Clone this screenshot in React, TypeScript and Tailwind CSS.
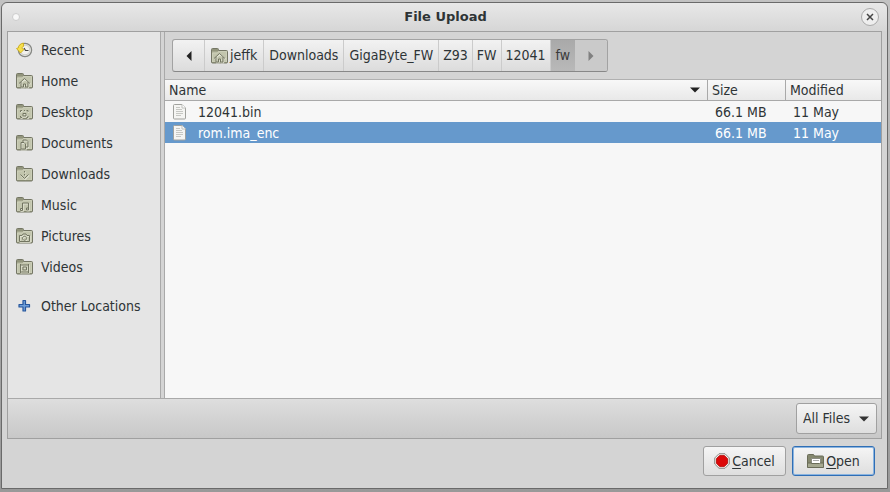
import React, { useState } from 'react';

type Glyph = 'home' | 'desktop' | 'documents' | 'downloads' | 'music' | 'pictures' | 'videos';

const glyphs: Record<Glyph, React.ReactNode> = {
  home: <path d="M3 10.500 8.500 5.500l5.500 5M5 9v5h2.500v-3h2v3H12V9" />,
  desktop: <path d="M4.500 8V6.500H6M10.500 6.500H12V8M4.500 12v1.500H6M12 12v1.500h-1.500M8 6.500h1M7 9.500h3v2.500H7z" />,
  documents: <path d="M5 7.500h3L9.500 9v5H5zM7 7V5h3.500L12 6.500V12H10" />,
  downloads: <path d="M8.500 5v1.500M8.500 8v1.500M4.500 8.500l4 4 4-4" />,
  music: <path d="M6.500 12.500V6h6v6M4.500 11.500h2v2h-2zM10.500 11h2v2h-2z" />,
  pictures: <path d="M3.500 7.500h2.500l1-1.500h3l1 1.500h2.500V13.500h-10zM8.500 8.300a2 2 0 1 0 .01 0" />,
  videos: <path d="M4.500 5v9M12.500 5v9M4.500 6h8M4.500 13h8M7 8h3.500v3H7z" />,
};

function Folder({ glyph }: { glyph: Glyph }) {
  return (
    <svg width="17" height="16" viewBox="0 0 17 16" fill="none" className="shrink-0" aria-hidden="true">
      <path d="M.5 14V1.500q0-1 1-1h5q1 0 1 1v1h8q1 0 1 1V14q0 1-1 1h-14q-1 0-1-1z" fill="#b4b79e" stroke="#747665" />
      <path d="M1 1h6v2.500H1z" fill="#92957c" />
      <path d="M1.500 14V5h5l1-1.500h8V14z" fill="#c2c5ad" stroke="#d6d9c4" strokeWidth=".6" />
      <path d="M1 14.500h15" stroke="#858871" />
      <g stroke="#eef0e2" strokeWidth="1.200" transform="translate(.6 .8)" opacity=".7">
        {glyphs[glyph]}
      </g>
      <g stroke="#727561" strokeWidth="1">
        {glyphs[glyph]}
      </g>
    </svg>
  );
}

function RecentIcon() {
  return (
    <svg width="17" height="16" viewBox="0 0 17 16" fill="none" className="shrink-0" aria-hidden="true">
      <circle cx="9" cy="8" r="6.600" fill="#f1f1ee" stroke="#858783" strokeWidth="1.300" />
      <circle cx="9" cy="8" r="4.900" stroke="#c8c9c4" />
      <path d="M8 6 9.500 8.500h3" stroke="#444" strokeWidth="1.200" />
      <path d="M7.500 1C4.300 1.500 2.500 3.500 2.200 6L.5 6.500 4.500 11 8 7.500 6 6.500C6.200 5 6.500 4.500 7.500 4.500z" fill="#f6df4c" stroke="#c9a80f" strokeWidth=".8" />
    </svg>
  );
}

function PlusIcon() {
  return (
    <svg width="17" height="16" viewBox="0 0 17 16" className="shrink-0" aria-hidden="true">
      <path d="M7 2.500h2.500v4h4V9h-4v4H7V9H3V6.500h4z" fill="#6f9fd8" stroke="#27579d" strokeWidth="1.200" strokeLinejoin="round" />
    </svg>
  );
}

function FileIcon() {
  return (
    <svg width="14" height="16" viewBox="0 0 14 16" fill="none" className="block" aria-hidden="true">
      <path d="M1.500.5H9l3.500 3.500v10q0 1-1 1h-10q-1 0-1-1v-12.500q0-1 1-1z" fill="#f5f5f3" stroke="#a0a19d" />
      <path d="M9 .5V4h3.500" fill="#fff" stroke="#c0c1bd" />
      <path d="M3 3.500h4M3 5.500h6M3 7.500h7M3 9.500h7M3 11.500h5" stroke="#c6c7c3" />
    </svg>
  );
}

function StopIcon() {
  return (
    <svg width="16" height="16" viewBox="0 0 16 16" className="shrink-0" aria-hidden="true">
      <path d="M5 .7h6L15.300 5v6L11 15.300H5L.7 11V5z" fill="#f2efec" stroke="#8c8a87" strokeWidth="1" />
      <path d="M5.700 2.400h4.600l3.300 3.300v4.600l-3.300 3.300H5.700l-3.300-3.300V5.700z" fill="#dc0808" stroke="#b00000" strokeWidth=".8" />
    </svg>
  );
}

function OpenIcon() {
  return (
    <svg width="17" height="16" viewBox="0 0 17 16" fill="none" className="shrink-0" aria-hidden="true">
      <path d="M.5 14V2.500q0-1 1-1h5l1 1.500h8q1 0 1 1V14z" fill="#85886f" stroke="#6a6c58" />
      <path d="M4.500 5.500h9v6h-9z" fill="#fff" stroke="#8b8c83" />
      <path d="M6 7.500h6" stroke="#aaa" />
      <path d="M.5 14.500V10H4l1 .5h7.500l1-.5h3v4.500z" fill="#a5a890" stroke="#6a6c58" />
    </svg>
  );
}

const places: { name: string; glyph: Glyph }[] = [
  { name: 'Home', glyph: 'home' },
  { name: 'Desktop', glyph: 'desktop' },
  { name: 'Documents', glyph: 'documents' },
  { name: 'Downloads', glyph: 'downloads' },
  { name: 'Music', glyph: 'music' },
  { name: 'Pictures', glyph: 'pictures' },
  { name: 'Videos', glyph: 'videos' },
];

const crumbs = ['Downloads', 'GigaByte_FW', 'Z93', 'FW', '12041'];

const files = [
  { name: '12041.bin', size: '66.1 MB', modified: '11 May' },
  { name: 'rom.ima_enc', size: '66.1 MB', modified: '11 May' },
];

const placeClass = 'flex h-[31px] w-full items-center gap-2 px-2 text-left';
const crumbClass = 'flex h-full items-center border-r border-[#cbcbcb] pb-px';
const actionClass =
  'flex h-[30px] items-center justify-center rounded-[3px] border bg-linear-to-b from-[#f5f5f5] to-[#dedede]';

export default function App() {
  const [selected, setSelected] = useState('rom.ima_enc');

  return (
    <div className="h-screen bg-linear-to-b from-[#c2c2c2] to-[#999999] pt-[2px] pr-[2px] pb-[3px] pl-px font-['DejaVu_Sans_Condensed','DejaVu_Sans',sans-serif] text-[14px] leading-5 text-[#2e3436]">
      <main className="flex h-full flex-col rounded-t-md border border-[#6a6a6a] bg-[#d4d4d4] px-[5px]">
        <header className="-mx-[5px] flex h-7 shrink-0 items-center rounded-t-md bg-linear-to-b from-[#e8e8e8] to-[#d6d6d6] px-2">
          <span className="flex w-5 justify-start pl-[2px]">
            <span className="size-2 rounded-full border border-[#cccccc] bg-[#f8f8f8]" />
          </span>
          <h1 className="flex-1 text-center font-['DejaVu_Sans',sans-serif] text-[13px] font-bold">File Upload</h1>
          <button aria-label="Close" className="flex size-[18px] items-center justify-center rounded-full border border-[#aaaaaa] bg-[#eeeeee]">
            <svg width="8" height="8" viewBox="0 0 8 8" aria-hidden="true">
              <path d="m1 1 6 6M7 1 1 7" stroke="#444" strokeWidth="1.500" />
            </svg>
          </button>
        </header>

        <section className="flex min-h-0 flex-1 flex-col border border-[#a0a0a0]">
          <div className="flex min-h-0 flex-1 border-b border-[#a9a9a9]">
            <nav aria-label="Places" className="w-[153px] shrink-0 border-r border-[#a9a9a9] bg-[#e5e5e5] pt-[2px]">
              <button className={placeClass}>
                <RecentIcon />
                Recent
              </button>
              {places.map((p) => (
                <button key={p.name} className={placeClass}>
                  <Folder glyph={p.glyph} />
                  {p.name}
                </button>
              ))}
              <div className="h-2" />
              <button className={placeClass}>
                <PlusIcon />
                Other Locations
              </button>
            </nav>

            <div className="ml-[3px] flex min-w-0 flex-1 flex-col border-l border-[#a9a9a9]">
              <div className="flex h-12 shrink-0 items-center border-b border-[#b0b0b0] px-[7px]">
                <div className="flex h-[33px] items-stretch overflow-hidden rounded-[3px] border border-[#a2a2a2] border-b-[#888888] bg-linear-to-b from-[#f2f2f2] to-[#dcdcdc]">
                  <button aria-label="Scroll path left" className="flex w-8 items-center justify-center border-r border-[#cbcbcb]">
                    <svg width="6" height="10" viewBox="0 0 6 10" aria-hidden="true">
                      <path d="M5.500 0v10L.5 5z" fill="#222" />
                    </svg>
                  </button>
                  <button className="flex h-full items-center border-r border-[#cbcbcb] px-[6px]">
                    <Folder glyph="home" />
                    <span className="pb-[2px] pl-[2px]">jeffk</span>
                  </button>
                  {crumbs.map((c) => (
                    <button key={c} className={crumbClass + (c.length > 5 ? ' px-[5px]' : ' px-1')}>
                      {c}
                    </button>
                  ))}
                  <button aria-current="page" className="flex h-full items-center bg-linear-to-b from-[#a9a9a9] to-[#b9b9b9] px-[5px] pb-px text-[#3a3a3a]">
                    fw
                  </button>
                  <button aria-label="Scroll path right" className="flex w-8 items-center justify-center bg-[#cacaca]">
                    <svg width="6" height="10" viewBox="0 0 6 10" aria-hidden="true">
                      <path d="M.5 0v10l5-5z" fill="#808080" />
                    </svg>
                  </button>
                </div>
              </div>

              <div className="min-h-0 flex-1 bg-[#f7f7f7]">
                <table className="w-full table-fixed border-separate border-spacing-0 text-left">
                  <colgroup>
                    <col />
                    <col className="w-[78px]" />
                    <col className="w-[96px]" />
                  </colgroup>
                  <thead>
                    <tr className="bg-linear-to-b from-[#f8f8f8] to-[#e8e8e8]">
                      <th aria-sort="descending" className="border-b border-[#a9a9a9] p-0 font-normal">
                        <button className="flex h-5 w-full items-center justify-between pr-[7px] pb-px pl-1">
                          Name
                          <svg width="10" height="6" viewBox="0 0 10 6" aria-hidden="true">
                            <path d="M0 .5h10L5 5.500z" fill="#222" />
                          </svg>
                        </button>
                      </th>
                      <th className="border-b border-l border-[#a9a9a9] p-0 font-normal">
                        <button className="flex h-5 w-full items-center pb-px pl-1">Size</button>
                      </th>
                      <th className="border-b border-l border-[#a9a9a9] p-0 font-normal">
                        <button className="flex h-5 w-full items-center pb-px pl-1">Modified</button>
                      </th>
                    </tr>
                  </thead>
                  <tbody>
                    {files.map((f) => (
                      <tr
                        key={f.name}
                        onClick={() => setSelected(f.name)}
                        className={selected === f.name ? 'h-[21px] bg-[#6699cc] text-white' : 'h-[21px]'}
                      >
                        <td className="p-0">
                          <span className="flex h-[21px] items-center gap-[11px] pl-2">
                            <FileIcon />
                            {f.name}
                          </span>
                        </td>
                        <td className="p-0 pl-2">{f.size}</td>
                        <td className="p-0 pl-2">{f.modified}</td>
                      </tr>
                    ))}
                  </tbody>
                </table>
              </div>
            </div>
          </div>

          <div className="flex h-[39px] shrink-0 items-center justify-end bg-linear-to-b from-[#dedede] to-[#c8c8c8] pr-1">
            <div className="relative">
              <select
                aria-label="File type"
                className="block h-[31px] w-[81px] appearance-none rounded-[3px] border border-[#a0a0a0] bg-linear-to-b from-[#f5f5f5] to-[#dedede] pb-px pl-[6px]"
              >
                <option>All Files</option>
              </select>
              <svg width="10" height="6" viewBox="0 0 10 6" className="pointer-events-none absolute top-[13px] right-2" aria-hidden="true">
                <path d="M0 .5h10L5 5.500z" fill="#333" />
              </svg>
            </div>
          </div>
        </section>

        <footer className="flex h-[49px] shrink-0 justify-end gap-[6px] pt-[7px] pr-[7px]">
          <button className={actionClass + ' w-[83px] gap-[2px] border-[#a0a0a0] pb-px'}>
            <StopIcon />
            <span>
              <span className="underline underline-offset-2">C</span>ancel
            </span>
          </button>
          <button className={actionClass + ' w-[83px] gap-[2px] border-[#2f6eb5] pb-px ring-1 ring-[#8ab4e0] ring-inset'}>
            <OpenIcon />
            <span>
              <span className="underline underline-offset-2">O</span>pen
            </span>
          </button>
        </footer>
      </main>
    </div>
  );
}
